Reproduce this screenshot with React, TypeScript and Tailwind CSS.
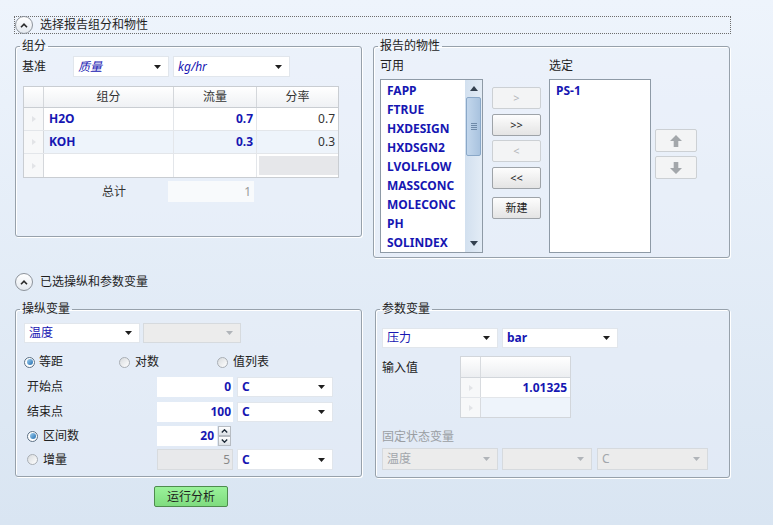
import React from 'react';

// 报告组分 / 灵敏度分析 设置页

const BLUE = 'text-[#1616b2]';

const Caret = ({ light }: { light?: boolean }) => (
  <svg width="7" height="4" viewBox="0 0 7 4">
    <path d="M0 0h7L3.5 4z" fill={light ? '#b0b4b9' : '#1e1e1e'} />
  </svg>
);

const RowMark = () => (
  <svg width="4" height="6" viewBox="0 0 4 6">
    <path d="M0 0l4 3-4 3z" fill="#e2e4e7" />
  </svg>
);

const Collapse = () => (
  <span className="w-[18px] h-[18px] rounded-full border border-[#8d939b] bg-gradient-to-b from-white to-[#e4e9ef] flex items-center justify-center">
    <svg width="8" height="5" viewBox="0 0 8 5">
      <path d="M1 4.2L4 1.2 7 4.2" stroke="#2a2a2a" strokeWidth="1.6" fill="none" />
    </svg>
  </span>
);

function SectionHeader({ title, focused }: { title: string; focused?: boolean }) {
  return (
    <div
      className={`w-[717px] h-[18px] flex items-center gap-[7px] border border-dotted ${
        focused ? 'border-[#6d6d6d]' : 'border-transparent'
      }`}
    >
      <Collapse />
      <span className="text-[12px] text-[#1e1e1e]">{title}</span>
    </div>
  );
}

function Group({ title, className, children }: { title: string; className?: string; children: React.ReactNode }) {
  return (
    <fieldset
      className={`border border-[#97a1ab] rounded-[3px] shadow-[inset_1px_1px_0_#fff,1px_1px_0_#fff] bg-[#eaf1f9]/40 ${className ?? ''}`}
    >
      <legend className="ml-[4px] px-[2px] text-[12px] leading-[16px] text-[#222]">{title}</legend>
      {children}
    </fieldset>
  );
}

function Select({
  text,
  className,
  textClass,
  disabled,
}: {
  text?: string;
  className: string;
  textClass?: string;
  disabled?: boolean;
}) {
  return (
    <div
      className={`flex items-center justify-between pl-[4px] pr-[7px] border ${
        disabled ? 'bg-[#ececec] border-[#d6dade] text-[#a2a6ab]' : 'bg-white border-[#e1e6ec]'
      } ${className}`}
    >
      <span className={`text-[12px] ${textClass ?? ''}`}>{text}</span>
      <Caret light={disabled} />
    </div>
  );
}

function Radio({ checked }: { checked?: boolean }) {
  return checked ? (
    <span className="w-[11px] h-[11px] rounded-full border border-[#5b6f84] bg-white flex items-center justify-center">
      <span className="w-[6px] h-[6px] rounded-full bg-gradient-to-br from-[#9fd0f0] to-[#1f6fb0]" />
    </span>
  ) : (
    <span className="w-[11px] h-[11px] rounded-full border border-[#a9aeb4] bg-gradient-to-br from-[#d8dbde] to-white" />
  );
}

function Btn({ label, disabled, className }: { label: string; disabled?: boolean; className?: string }) {
  return (
    <div
      className={`w-[49px] h-[22px] rounded-[2px] border flex items-center justify-center text-[11px] ${
        disabled
          ? 'border-[#ccd0d4] bg-[#f3f4f5] text-[#b4b7ba]'
          : 'border-[#9ea3a8] bg-gradient-to-b from-[#fdfdfd] to-[#e4e4e4] text-[#222]'
      } ${className ?? ''}`}
    >
      {label}
    </div>
  );
}

const Arrow = ({ down }: { down?: boolean }) => (
  <svg width="12" height="12" viewBox="0 0 12 12" className={down ? 'rotate-180' : ''}>
    <path d="M6 0l6 6H8.3v6H3.7V6H0z" fill="#a3a7ab" />
  </svg>
);

const available = ['FAPP', 'FTRUE', 'HXDESIGN', 'HXDSGN2', 'LVOLFLOW', 'MASSCONC', 'MOLECONC', 'PH', 'SOLINDEX'];

function Scrollbar() {
  return (
    <div className="w-[17px] h-full bg-gradient-to-r from-[#d2e0ef] to-[#e3ecf6] flex flex-col items-center">
      <div className="h-[17px] flex items-center justify-center">
        <svg width="8" height="5" viewBox="0 0 8 5">
          <path d="M0 5L4 0l4 5z" fill="#33404f" />
        </svg>
      </div>
      <div className="w-[15px] h-[59px] rounded-[2px] border border-[#8aa8c8] bg-gradient-to-r from-[#c3d7ec] to-[#a9c3df] flex flex-col items-center justify-center gap-[1px]">
        <span className="w-[6px] h-[1px] bg-[#6f8aa8]" />
        <span className="w-[6px] h-[1px] bg-[#6f8aa8]" />
        <span className="w-[6px] h-[1px] bg-[#6f8aa8]" />
        <span className="w-[6px] h-[1px] bg-[#6f8aa8]" />
      </div>
      <div className="flex-1" />
      <div className="h-[17px] flex items-center justify-center">
        <svg width="8" height="5" viewBox="0 0 8 5">
          <path d="M0 0h8L4 5z" fill="#33404f" />
        </svg>
      </div>
    </div>
  );
}

function ComponentTable() {
  const rows = [
    { name: 'H2O', flow: '0.7', frac: '0.7', bg: 'bg-white' },
    { name: 'KOH', flow: '0.3', frac: '0.3', bg: 'bg-[#eef4fb]' },
  ];
  return (
    <div className="ml-[7px] w-[316px] border border-[#c9cdd2] bg-white text-[12px]">
      <div className="flex h-[21px] border-b border-[#c9cdd2] bg-gradient-to-b from-white to-[#eff1f4] text-[#333]">
        <div className="w-[20px] border-r border-[#d4d7db]" />
        <div className="w-[130px] border-r border-[#d4d7db] flex items-center justify-center">组分</div>
        <div className="w-[83px] border-r border-[#d4d7db] flex items-center justify-center">流量</div>
        <div className="flex-1 flex items-center justify-center">分率</div>
      </div>
      {rows.map((r) => (
        <div key={r.name} className={`flex h-[23px] border-b border-[#e3e6ea] ${r.bg}`}>
          <div className="w-[20px] border-r border-[#d4d7db] bg-[#f7f8f9] flex items-center justify-center">
            <RowMark />
          </div>
          <div className={`w-[130px] border-r border-[#e3e6ea] flex items-center pl-[5px] font-bold ${BLUE}`}>{r.name}</div>
          <div className={`w-[83px] border-r border-[#e3e6ea] flex items-center justify-end pr-[3px] font-bold ${BLUE}`}>
            {r.flow}
          </div>
          <div className="flex-1 flex items-center justify-end pr-[3px] text-[#333]">{r.frac}</div>
        </div>
      ))}
      <div className="flex h-[23px]">
        <div className="w-[20px] border-r border-[#d4d7db] bg-[#f7f8f9] flex items-center justify-center">
          <RowMark />
        </div>
        <div className="w-[130px] border-r border-[#e3e6ea]" />
        <div className="w-[83px] border-r border-[#e3e6ea]" />
        <div className="flex-1 p-[2px] pr-0">
          <div className="h-full bg-[#e6e7ea]" />
        </div>
      </div>
    </div>
  );
}

function ValueRow({ label, value, unit }: { label: string; value: string; unit: string }) {
  return (
    <div className="flex items-center h-[20px]">
      <span className="w-[141px] pl-[11px] text-[12px] text-[#222]">{label}</span>
      <div className={`w-[76px] h-full flex items-center justify-end pr-[2px] text-[12px] bg-white font-bold ${BLUE}`}>
        {value}
      </div>
      <Select text={unit} className="ml-[4px] w-[96px] h-full" textClass={`font-bold ${BLUE}`} />
    </div>
  );
}

export default function App() {
  return (
    <div className="w-[773px] h-[525px] overflow-hidden bg-gradient-to-b from-[#eef4fc] to-[#d9e5f2] pt-[16px] pl-[14px] font-['Noto_Sans','Noto_Sans_CJK_SC',sans-serif] text-[#222]">
      <SectionHeader title="选择报告组分和物性" focused />

      <div className="mt-[4px] pl-[1px] flex items-start gap-[11px]">
        <Group title="组分" className="w-[347px] pb-[34px]">
          <div className="mt-[2px] pl-[6px] flex items-center h-[21px]">
            <span className="w-[51px] text-[12px]">基准</span>
            <Select text="质量" className="w-[96px] h-full" textClass={`italic ${BLUE}`} />
            <Select text="kg/hr" className="ml-[4px] w-[117px] h-full" textClass={`italic ${BLUE}`} />
          </div>
          <div className="mt-[9px]">
            <ComponentTable />
          </div>
          <div className="mt-[3px] flex items-center h-[21px]">
            <span className="ml-[86px] w-[66px] text-[12px] text-[#333]">总计</span>
            <div className="w-[86px] h-full bg-[#f8fafc] flex items-center justify-end pr-[3px] text-[12px] text-[#999]">1</div>
          </div>
        </Group>

        <Group title="报告的物性" className="w-[357px] pb-[4px]">
          <div className="flex pl-[6px]">
            <div>
              <div className="mt-[4px] h-[16px] text-[12px] leading-[16px]">可用</div>
              <div className="mt-[5px] w-[103px] h-[174px] border border-[#8e9aa6] bg-white flex">
                <div className="flex-1 pl-[6px] pt-[1px]">
                  {available.map((p) => (
                    <div key={p} className={`h-[19px] leading-[19px] text-[12px] font-bold ${BLUE}`}>
                      {p}
                    </div>
                  ))}
                </div>
                <Scrollbar />
              </div>
            </div>
            <div className="ml-[9px] pt-[33px] flex flex-col">
              <Btn label=">" disabled />
              <Btn label=">>" className="mt-[5px]" />
              <Btn label="<" disabled className="mt-[4px]" />
              <Btn label="<<" className="mt-[5px]" />
              <Btn label="新建" className="mt-[8px]" />
            </div>
            <div className="ml-[8px]">
              <div className="mt-[4px] h-[16px] text-[12px] leading-[16px]">选定</div>
              <div className="mt-[5px] w-[102px] h-[174px] border border-[#8e9aa6] bg-white pl-[6px] pt-[1px]">
                <div className={`h-[19px] leading-[19px] text-[12px] font-bold ${BLUE}`}>PS-1</div>
              </div>
            </div>
            <div className="ml-[4px] pt-[75px] flex flex-col gap-[4px]">
              <div className="w-[42px] h-[23px] rounded-[2px] border border-[#ccd0d4] bg-[#f3f4f5] flex items-center justify-center">
                <Arrow />
              </div>
              <div className="w-[42px] h-[23px] rounded-[2px] border border-[#ccd0d4] bg-[#f3f4f5] flex items-center justify-center">
                <Arrow down />
              </div>
            </div>
          </div>
        </Group>
      </div>

      <div className="mt-[15px]">
        <SectionHeader title="已选操纵和参数变量" />
      </div>

      <div className="mt-[10px] pl-[1px] flex items-start gap-[13px]">
        <Group title="操纵变量" className="w-[347px] pb-[6px]">
          <div className="mt-[6px] pl-[8px] flex items-center h-[20px]">
            <Select text="温度" className="w-[116px] h-full" textClass={BLUE} />
            <Select className="ml-[3px] w-[98px] h-full" disabled />
          </div>
          <div className="mt-[11px] pl-[8px] flex items-center h-[16px] text-[12px]">
            <span className="w-[95px] flex items-center gap-[4px]">
              <Radio checked />
              等距
            </span>
            <span className="w-[98px] flex items-center gap-[5px]">
              <Radio />
              对数
            </span>
            <span className="flex items-center gap-[5px]">
              <Radio />
              值列表
            </span>
          </div>
          <div className="mt-[7px]">
            <ValueRow label="开始点" value="0" unit="C" />
          </div>
          <div className="mt-[5px]">
            <ValueRow label="结束点" value="100" unit="C" />
          </div>
          <div className="mt-[4px] flex items-center h-[20px]">
            <span className="w-[141px] pl-[11px] flex items-center gap-[5px] text-[12px]">
              <Radio checked />
              区间数
            </span>
            <div className={`w-[60px] h-full bg-white flex items-center justify-end pr-[3px] text-[12px] font-bold ${BLUE}`}>20</div>
            <div className="w-[15px] h-full flex flex-col pl-[1px]">
              {[0, 1].map((i) => (
                <div key={i} className="h-[10px] w-[13px] bg-gradient-to-b from-white to-[#dde2e7] border border-[#b7bcc2] flex items-center justify-center">
                  <svg width="7" height="4" viewBox="0 0 7 4" className={i ? 'rotate-180' : ''}>
                    <path d="M0.8 3.4L3.5 0.8 6.2 3.4" stroke="#1e2a38" strokeWidth="1.4" fill="none" />
                  </svg>
                </div>
              ))}
            </div>
          </div>
          <div className="mt-[3px] flex items-center h-[21px]">
            <span className="w-[141px] pl-[11px] flex items-center gap-[5px] text-[12px]">
              <Radio />
              增量
            </span>
            <div className="w-[76px] h-full bg-[#e8e9eb] border border-[#d8dbde] flex items-center justify-end pr-[2px] text-[12px] text-[#888]">
              5
            </div>
            <Select text="C" className="ml-[4px] w-[96px] h-full" textClass={`font-bold ${BLUE}`} />
          </div>
        </Group>

        <Group title="参数变量" className="w-[355px] pb-[7px]">
          <div className="mt-[11px] pl-[6px] flex items-center h-[20px]">
            <Select text="压力" className="w-[116px] h-full" textClass={BLUE} />
            <Select text="bar" className="ml-[4px] w-[116px] h-full" textClass={`font-bold ${BLUE}`} />
          </div>
          <div className="mt-[8px] pl-[6px] flex items-start">
            <span className="mt-[4px] w-[78px] text-[12px] leading-[16px]">输入值</span>
            <div className="w-[111px] border border-[#d2d6db] bg-white text-[12px]">
              <div className="flex h-[21px] border-b border-[#d2d6db] bg-gradient-to-b from-white to-[#eceef1]">
                <div className="w-[20px] border-r border-[#d8dbdf]" />
                <div className="flex-1" />
              </div>
              <div className="flex h-[20px] border-b border-[#e3e6ea]">
                <div className="w-[20px] border-r border-[#d8dbdf] bg-[#f7f8f9] flex items-center justify-center">
                  <RowMark />
                </div>
                <div className={`flex-1 flex items-center justify-end pr-[3px] font-bold ${BLUE}`}>1.01325</div>
              </div>
              <div className="flex h-[19px] bg-[#eef4fb]">
                <div className="w-[20px] border-r border-[#d8dbdf] bg-[#f7f8f9] flex items-center justify-center">
                  <RowMark />
                </div>
                <div className="flex-1" />
              </div>
            </div>
          </div>
          <div className="mt-[11px] pl-[6px] h-[16px] text-[12px] leading-[16px] text-[#9a9ea3]">固定状态变量</div>
          <div className="mt-[3px] pl-[6px] flex items-center h-[22px]">
            <Select text="温度" className="w-[116px] h-full" disabled />
            <Select className="ml-[4px] w-[90px] h-full" disabled />
            <Select text="C" className="ml-[5px] w-[111px] h-full" disabled />
          </div>
        </Group>
      </div>

      <div className="mt-[8px] ml-[140px] w-[74px] h-[21px] rounded-[2px] border border-[#4e8c4e] bg-gradient-to-b from-[#9af29a] to-[#7fdc7f] flex items-center justify-center text-[12px] text-[#1e1e1e]">
        运行分析
      </div>
    </div>
  );
}
